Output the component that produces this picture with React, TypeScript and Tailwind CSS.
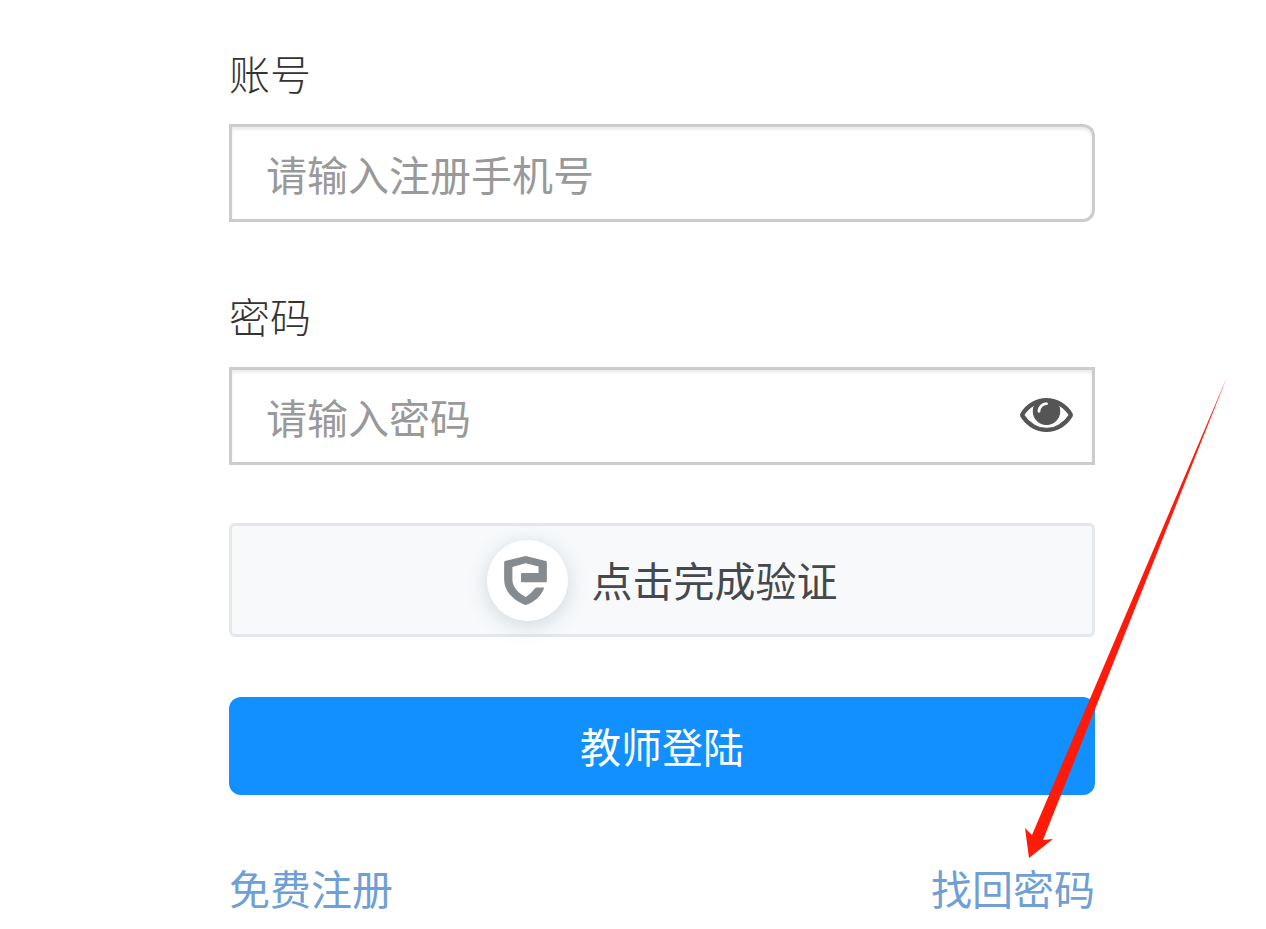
import type { InputHTMLAttributes, ReactNode } from 'react'
import clsx from 'clsx'

function EyeIcon() {
  return (
    <svg viewBox="0 384 1792 1152" className="h-[34px] w-[53px]" fill="currentColor" aria-hidden="true">
      <path d="M1664 960q-152-236-381-353 61 104 61 225 0 185-131.5 316.5t-316.5 131.5-316.5-131.5-131.5-316.5q0-121 61-225-229 117-381 353 133 205 333.5 326.5t434.5 121.5 434.5-121.5 333.5-326.5zm-720-384q0-20-14-34t-34-14q-125 0-214.5 89.5t-89.5 214.5q0 20 14 34t34 14 34-14 14-34q0-86 61-147t147-61q20 0 34-14t14-34zm848 384q0 34-20 69-140 230-376.5 368.5t-499.5 138.5-499.5-139-376.5-368q-20-35-20-69t20-69q140-229 376.5-368t499.5-139 499.5 139 376.5 368q20 35 20 69z" />
      {/* slightly heavier lids */}
      <path
        fill="none"
        stroke="currentColor"
        strokeWidth="36"
        d="M1664 960q-152-236-381-353 61 104 61 225 0 185-131.5 316.5t-316.5 131.5-316.5-131.5-131.5-316.5q0-121 61-225-229 117-381 353 133 205 333.5 326.5t434.5 121.5 434.5-121.5 333.5-326.5z"
      />
    </svg>
  )
}

function ShieldIcon() {
  return (
    <svg viewBox="0 0 129 148" className="h-[49px] w-[43px]" fill="#868b8f" aria-hidden="true">
      <path d="M65 0 L126 15 Q129 16 129 20 V76 Q129 79 126 79 H54 Q51 79 51 76 V54 Q51 51 54 51 H104 V32 L65 22 L25 33 V72 C25 96 46 114 65 124 C77 117 86 108 91 100 Q94 95 99 95 H121 C114 119 90 141 65 148 C38 140 0 112 0 72 V20 Q0 16 3 15 Z" />
    </svg>
  )
}

function Arrow() {
  return (
    <svg
      viewBox="0 0 202 481"
      className="pointer-events-none absolute -right-[132px] top-[335px] h-[481px] w-[202px]"
      fill="#ff1a0a"
      aria-hidden="true"
    >
      <path d="M202 0 L18 463 L28 462 L4 481 L0 451 L7 458 Z" />
    </svg>
  )
}

interface FieldProps extends InputHTMLAttributes<HTMLInputElement> {
  id: string
  label: string
  action?: ReactNode
}

function Field({ id, label, action, className, ...props }: FieldProps) {
  return (
    <div>
      <label htmlFor={id} className="mb-[22px] block leading-[60px] font-light text-[#333]">
        {label}
      </label>
      <div className="relative">
        <input
          id={id}
          className={clsx(
            'block h-[98px] w-full border-3 border-[#ccc] bg-white px-[34px] text-[#555] shadow-[inset_0_3px_3px_rgba(0,0,0,0.075)] outline-none placeholder:text-[#999]',
            className,
          )}
          {...props}
        />
        {action}
      </div>
    </div>
  )
}

export default function App() {
  return (
    <main className="min-h-screen overflow-hidden bg-white pt-[42px] pr-[171px] pl-[229px] font-['Noto_Sans_CJK_SC',sans-serif] text-[41px]">
      <form className="relative" onSubmit={(e) => e.preventDefault()}>
        <Field id="account" label="账号" type="tel" placeholder="请输入注册手机号" className="mb-[63px] rounded-r-xl" />
        <Field
          id="password"
          label="密码"
          type="password"
          placeholder="请输入密码"
          className="mb-[58px] pr-24"
          action={
            <button type="button" aria-label="显示密码" className="absolute top-[31px] right-[22px] text-[#555]">
              <EyeIcon />
            </button>
          }
        />

        <button
          type="button"
          className="mb-[60px] flex h-[114px] w-full items-center justify-center gap-6 rounded-md border-3 border-[#e4e7eb] bg-[#f7f9fb] text-[#45494c]"
        >
          <span className="flex size-[81px] items-center justify-center rounded-full bg-white pr-1 shadow-[0_4px_20px_rgba(100,120,130,0.25)]">
            <ShieldIcon />
          </span>
          点击完成验证
        </button>

        <button type="submit" className="mb-[62px] block h-[98px] w-full rounded-xl bg-[#1290ff] text-white">
          教师登陆
        </button>

        <div className="flex justify-between leading-[60px] text-[#6f9fd4]">
          <a href="#register">免费注册</a>
          <a href="#forgot">找回密码</a>
        </div>

        <Arrow />
      </form>
    </main>
  )
}
